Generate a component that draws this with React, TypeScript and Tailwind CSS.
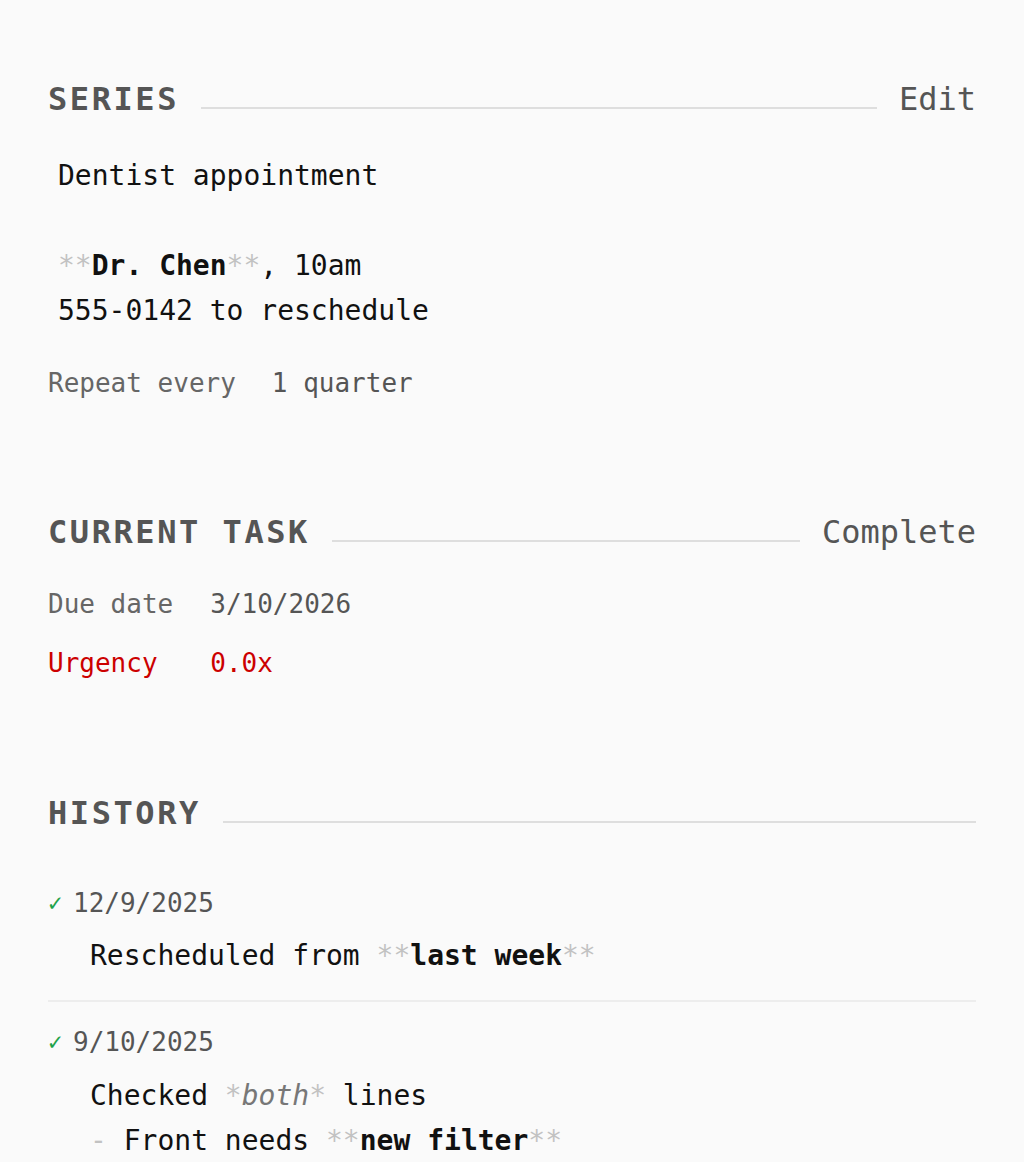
import React from "react";

const mono = { fontFamily: '"DejaVu Sans Mono", "Liberation Mono", monospace' };

function Heading({ title, action }: { title: string; action?: string }) {
    return <div className="flex items-center">
        <h2 className="text-[32px] leading-[48px] font-semibold tracking-[0.08em] text-[#555]">{title}</h2>
        <div className="flex-1 h-[2px] bg-[#dedede] mt-[18px] ml-[22px]" />
        {action ? <button className="ml-[22px] text-[32px] leading-[48px] text-[#555]">{action}</button> : null}
    </div>
}

const Mark = ({ children }: { children: React.ReactNode }) => <span className="text-[#c2c2c2] font-normal">{children}</span>

export default function App() {
    return <div style={mono} className="min-h-[1162px] bg-[#fafafa] px-12 pt-[75px] text-[#111]">
        <section>
            <Heading title="SERIES" action="Edit" />
            <div className="mt-[30px] pl-[10px] text-[28px] leading-[45px]">
                <p>Dentist appointment</p>
                <p>&nbsp;</p>
                <p><Mark>**</Mark><b className="font-bold">Dr. Chen</b><Mark>**</Mark>, 10am</p>
                <p>555-0142 to reschedule</p>
            </div>
            <div className="mt-[30px] flex gap-[36px] text-[26px] leading-[40px]">
                <span className="text-[#666]">Repeat every</span>
                <span className="text-[#555]">1 quarter</span>
            </div>
        </section>

        <section className="mt-[105px]">
            <Heading title="CURRENT TASK" action="Complete" />
            <div className="mt-[28px] grid grid-cols-[auto_1fr] gap-x-[37px] gap-y-[19px] text-[26px] leading-[40px]">
                <span className="text-[#666]">Due date</span>
                <span className="text-[#555]">3/10/2026</span>
                <span className="text-[#cc0000]">Urgency</span>
                <span className="text-[#cc0000]">0.0x</span>
            </div>
        </section>

        <section className="mt-[106px]">
            <Heading title="HISTORY" />
            <div className="mt-[46px]">
                <div className="pb-[22px] border-b-2 border-[#ededed]">
                    <div className="flex items-center text-[26px] leading-[40px]">
                        <span className="text-[#1fa34a] text-[24px] w-[25px]">✓</span>
                        <span className="text-[#555]">12/9/2025</span>
                    </div>
                    <div className="mt-[10px] pl-[42px] text-[28px] leading-[45px]">
                        <p>Rescheduled from <Mark>**</Mark><b className="font-bold">last week</b><Mark>**</Mark></p>
                    </div>
                </div>
                <div className="pt-[20px]">
                    <div className="flex items-center text-[26px] leading-[40px]">
                        <span className="text-[#1fa34a] text-[24px] w-[25px]">✓</span>
                        <span className="text-[#555]">9/10/2025</span>
                    </div>
                    <div className="mt-[11px] pl-[42px] text-[28px] leading-[45px]">
                        <p>Checked <Mark>*</Mark><i className="italic text-[#777]">both</i><Mark>*</Mark> lines</p>
                        <p><Mark>-</Mark> Front needs <Mark>**</Mark><b className="font-bold">new filter</b><Mark>**</Mark></p>
                    </div>
                </div>
            </div>
        </section>
    </div>
}
